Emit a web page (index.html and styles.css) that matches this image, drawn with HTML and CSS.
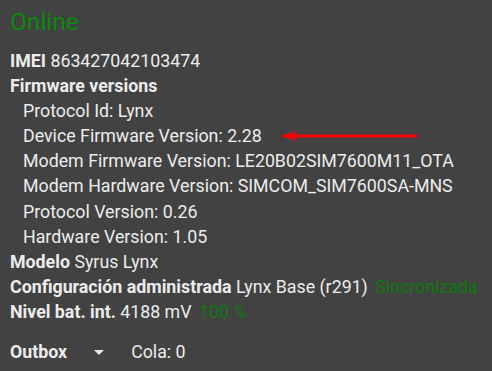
FILE: index.html
```html
<!DOCTYPE html>
<html>
<head>
<meta charset="utf-8">
<link rel="stylesheet" href="styles.css">
</head>
<body>
<div class="panel">
  <div class="status">Online</div>
  <div class="row"><b>IMEI</b> 863427042103474</div>
  <div class="row"><b>Firmware versions</b></div>
  <div class="sub">
    <div class="row">Protocol Id: Lynx</div>
    <div class="row fw">Device Firmware Version: 2.28
      <svg class="arrow" width="142" height="12" viewBox="0 0 142 12"><path d="M2 6 L19 1 L16 4.5 L139 4.5 L139 7.5 L16 7.5 L19 11 Z" fill="#f00"/></svg>
    </div>
    <div class="row">Modem Firmware Version: LE20B02SIM7600M11_OTA</div>
    <div class="row">Modem Hardware Version: SIMCOM_SIM7600SA-MNS</div>
    <div class="row">Protocol Version: 0.26</div>
    <div class="row">Hardware Version: 1.05</div>
  </div>
  <div class="row"><b>Modelo</b> Syrus Lynx</div>
  <div class="row"><b>Configuración administrada</b> Lynx Base (r291) <span class="ok">Sincronizada</span></div>
  <div class="row"><b>Nivel bat. int.</b> 4188 mV <span class="ok">100 %</span></div>
  <div class="outbox">
    <b>Outbox</b>
    <span class="caret"></span>
    <span class="cola">Cola: 0</span>
  </div>
</div>
</body>
</html>
```
FILE: styles.css
```css
html, body {
  margin: 0;
  background: #424242;
}
.panel {
  width: 492px;
  height: 371px;
  box-sizing: border-box;
  padding: 6px 10px 0 10px;
  font-family: Roboto, "Liberation Sans", sans-serif;
  color: #ececec;
  font-size: 17.8px;
}
.status {
  color: #0b8a0b;
  font-size: 24.5px;
  line-height: 32px;
  margin-bottom: 10px;
}
.row {
  line-height: 25.1px;
  white-space: nowrap;
}
.row b {
  font-weight: 700;
}
.sub {
  padding-left: 13px;
}
.fw {
  position: relative;
}
.arrow {
  position: absolute;
  left: 255px;
  top: 7px;
}
.ok {
  color: #0d7a0d;
  margin-left: 3px;
}
.outbox {
  display: flex;
  align-items: center;
  margin-top: 15px;
  line-height: 25px;
}
.caret {
  width: 0;
  height: 0;
  border-left: 5px solid transparent;
  border-right: 5px solid transparent;
  border-top: 5px solid #e6e6e6;
  margin-left: 27px;
  margin-top: 2px;
}
.cola {
  margin-left: 27px;
}
```
